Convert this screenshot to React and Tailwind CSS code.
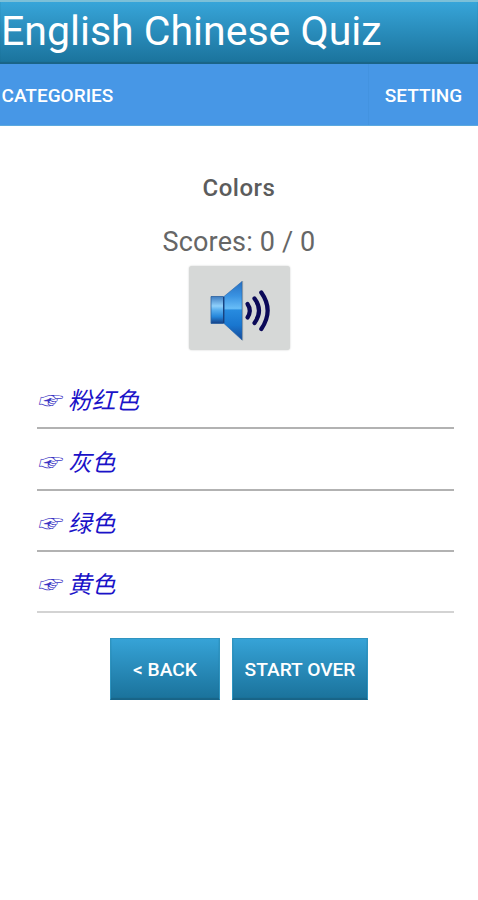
import React, { useState } from 'react';

const answers = ['粉红色', '灰色', '绿色', '黄色'];

function Header() {
  return (
    <header className="h-16 border-t-2 border-[#7cc0d8] bg-linear-to-b from-[#37a5d9] to-[#1a729b] pl-px shadow-[inset_0_-2px_1px_#1a6487]">
      <h1 className="pt-px text-[41px] leading-[57px] font-normal text-white whitespace-nowrap">English Chinese Quiz</h1>
    </header>
  );
}

function NavBar() {
  return (
    <nav className="flex h-[62px] items-stretch justify-between border-b border-[#5ba9df] bg-[#4797e6] text-[19px] font-medium text-white">
      <button type="button" className="pt-[3px] pl-[1.5px]">CATEGORIES</button>
      <button type="button" className="w-[110px] border-l border-[#4393e0] pt-[3px]">SETTING</button>
    </nav>
  );
}

function SpeakerIcon() {
  return (
    <svg viewBox="0 0 62 62" className="h-[62px] w-[62px]" fill="none">
      <defs>
        <linearGradient id="box" x1="0" y1="0" x2="0" y2="1">
          <stop offset="0" stopColor="#3f7cc0" />
          <stop offset="0.35" stopColor="#8fd0fb" />
          <stop offset="0.5" stopColor="#58aeee" />
          <stop offset="0.75" stopColor="#2586da" />
          <stop offset="1" stopColor="#153f85" />
        </linearGradient>
        <linearGradient id="cone" x1="0" y1="0" x2="0" y2="1">
          <stop offset="0" stopColor="#276fc1" />
          <stop offset="0.25" stopColor="#3a93e2" />
          <stop offset="0.46" stopColor="#68bdf7" />
          <stop offset="0.49" stopColor="#278bdf" />
          <stop offset="0.75" stopColor="#1976cf" />
          <stop offset="1" stopColor="#174a98" />
        </linearGradient>
      </defs>
      <path d="M1 17.5 H13.5 V44.5 H1 Z" fill="url(#box)" stroke="#285f9f" strokeWidth="0.8" />
      <path d="M14 17.5 L32 2.5 V61 L14 44.5 Z" fill="url(#cone)" stroke="#2665ab" strokeWidth="0.6" />
      <path d="M13.7 18 V44" stroke="#163e7a" strokeWidth="1.2" />
      <path d="M32.6 2 V61.5" stroke="#8597a7" strokeWidth="1" />
      <g stroke="#0b0958" strokeWidth="4.2" strokeLinecap="round">
        <path d="M37.5 25 Q42 31.5 37.5 38.5" />
        <path d="M44.5 19.5 Q53.5 31.5 44.5 44" />
        <path d="M51.3 13.5 Q64 31.5 51.3 50" />
      </g>
    </svg>
  );
}

function AnswerRow({ label, last, selected, onSelect }) {
  return (
    <li className={`h-[61.3px] border-b-2 ${last ? 'border-[#d3d3d3]' : 'border-[#b2b2b2]'}`}>
      <button
        type="button"
        aria-pressed={selected}
        onClick={onSelect}
        className="flex h-full w-full items-center pt-[5px] text-left font-['Noto_Sans_CJK_SC',sans-serif] text-[23.7px] leading-none text-[#1a12c8] italic"
      >
        <span className="w-[31px] text-[#3a35c4]">☞</span>
        <span>{label}</span>
      </button>
    </li>
  );
}

function ActionButton({ children, className, onClick }) {
  return (
    <button
      type="button"
      onClick={onClick}
      className={`h-[62px] border border-[#2f94c0] border-b-[#176387] bg-linear-to-b from-[#36a3d7] to-[#1a729b] pt-[3px] text-[19.2px] font-medium text-white shadow-[inset_0_-1px_1px_#1a6487] ${className}`}
    >
      {children}
    </button>
  );
}

function App() {
  const [selected, setSelected] = useState(null);

  return (
    <div className="min-h-screen bg-white font-[Roboto,sans-serif]">
      <Header />
      <NavBar />
      <main className="flex flex-col items-center text-[#5c5c5c]">
        <h2 className="mt-[47px] text-[24px] leading-[30px] font-medium tracking-[0.5px]">Colors</h2>
        <p className="mt-[22px] text-[27px] leading-[34px] font-normal tracking-[0.15px] text-[#666]">Scores: 0 / 0</p>
        <button
          type="button"
          aria-label="Play sound"
          className="mt-[7px] flex h-[84px] w-[101px] items-center justify-center rounded-[3px] bg-[#d6d8d7] pt-1 pl-[3px] shadow-[0_0_2px_#c9cbca]"
        >
          <SpeakerIcon />
        </button>
        <ul className="mt-[18px] ml-[13px] w-[417px]">
          {answers.map((label, index) => (
            <AnswerRow
              key={label}
              label={label}
              last={index === answers.length - 1}
              selected={selected === index}
              onSelect={() => setSelected(index)}
            />
          ))}
        </ul>
        <div className="mt-[25px] flex gap-3">
          <ActionButton className="w-[110px]">&lt; BACK</ActionButton>
          <ActionButton className="w-[136px]" onClick={() => setSelected(null)}>START OVER</ActionButton>
        </div>
      </main>
    </div>
  );
}

export default App;
